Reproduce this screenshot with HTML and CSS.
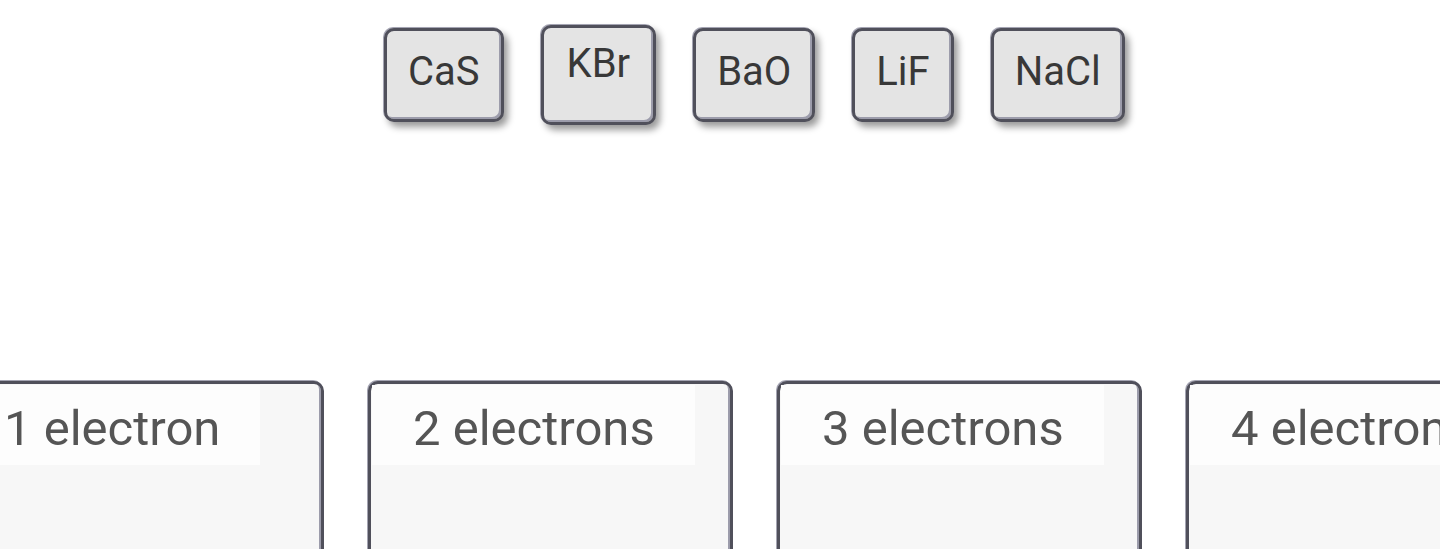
FILE: index.html
```html
<!DOCTYPE html>
<html lang="en">
<head>
    <meta charset="UTF-8">
    <meta name="viewport" content="width=device-width, initial-scale=1.0">
    <title>Sort the Compounds</title>
    <link rel="stylesheet" href="styles.css">
</head>
<body>
    <div class="tile-bank">
        <div class="tile">CaS</div>
        <div class="tile tile-lifted">KBr</div>
        <div class="tile">BaO</div>
        <div class="tile">LiF</div>
        <div class="tile">NaCl</div>
    </div>

    <div class="drop-row">
        <div class="drop-zone">
            <div class="zone-label">1 electron</div>
        </div>
        <div class="drop-zone">
            <div class="zone-label">2 electrons</div>
        </div>
        <div class="drop-zone">
            <div class="zone-label">3 electrons</div>
        </div>
        <div class="drop-zone">
            <div class="zone-label">4 electrons</div>
        </div>
        <div class="drop-zone">
            <div class="zone-label">5 electrons</div>
        </div>
    </div>
</body>
</html>
```

FILE: styles.css
```css
body {
    font-family: Roboto, "Noto Sans", Arial, sans-serif;
    background-color: #ffffff;
    margin: 0;
    padding: 0;
    overflow: hidden;
}

.tile-bank {
    display: flex;
    gap: 37px;
    padding-left: 384px;
    padding-top: 28px;
    align-items: flex-start;
}

.tile {
    background: #e4e4e4;
    color: #383838;
    font-size: 40px;
    line-height: 47px;
    padding: 17px 21px 24px;
    border: 3px solid #50505b;
    border-radius: 10px;
    box-shadow: -1px -1px 0 #a4a4b2, inset -2px -2px 0 #9c9cab, 4px 5px 7px rgba(0, 0, 0, 0.4);
}

.tile-lifted {
    margin-top: -3px;
    padding: 12px 23px 35px;
}

.drop-row {
    display: flex;
    gap: 44px;
    margin-left: -41px;
    margin-top: 256px;
}

.drop-zone {
    flex: 0 0 365px;
    height: 300px;
    box-sizing: border-box;
    background: #f7f7f7;
    border: 3px solid #50505b;
    border-radius: 10px;
    box-shadow: -1px -1px 0 #a4a4b2, inset -2px -2px 0 #9c9cab;
    padding: 1px 0 0 1px;
}

.zone-label {
    display: inline-block;
    background: #fdfdfd;
    color: #555555;
    font-size: 49px;
    line-height: 56px;
    padding: 16px 40px 8px 41px;
}
```
